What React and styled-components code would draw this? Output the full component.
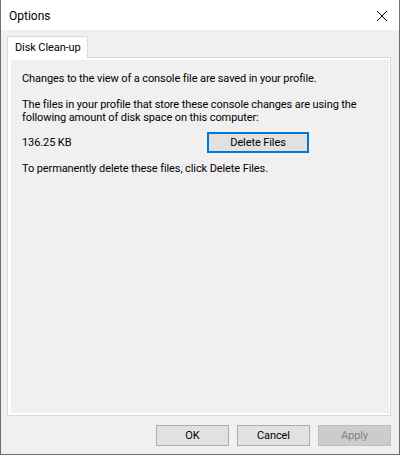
import styled, {createGlobalStyle} from "styled-components";

const GlobalStyle = createGlobalStyle`
    * { box-sizing: border-box; }
    html, body { margin: 0; padding: 0; background: #f0f0f0; }
    body {
        font-family: "Segoe UI", Roboto, "Liberation Sans", Arial, sans-serif;
        font-size: 11px;
        letter-spacing: -0.1px;
        color: #000;
    }
`;

const Window = styled.div`
    display: flex;
    flex-direction: column;
    width: 400px;
    height: 455px;
    background: #f0f0f0;
    border: 1px solid #6f6f6f;
    border-top: none;
`;
const TitleBar = styled.div`
    display: flex;
    align-items: center;
    justify-content: space-between;
    height: 31px;
    padding: 1px 10px 0 8px;
    background: #fff;
    font-size: 12px;
    letter-spacing: 0;
`;
const CloseBtn = styled.div`
    display: flex;
    width: 12px;
    height: 12px;
    margin-right: 1px;
`;
const Body = styled.div`
    flex: 1;
    display: flex;
    flex-direction: column;
    padding: 6px 8px 8px 6px;
`;
const TabStrip = styled.div`
    display: flex;
    height: 22px;
    margin-bottom: -1px;
    position: relative;
    z-index: 1;
`;
const Tab = styled.div`
    display: flex;
    align-items: center;
    height: 22px;
    padding: 0 6px 1px 7px;
    background: #fff;
    border: 1px solid #d9d9d9;
    border-bottom: none;
`;
const Panel = styled.div`
    display: flex;
    height: 359px;
    background: #fff;
    border: 1px solid #d9d9d9;
    padding: 2px 1px 2px 3px;
`;
const Page = styled.div`
    flex: 1;
    background: #f0f0f0;
    padding: 12px 11px;
    white-space: nowrap;
`;
const Para = styled.p`
    margin: 0 0 ${({$gap}) => $gap || 0}px;
    line-height: 13px;
`;
const SizeRow = styled.div`
    display: flex;
    align-items: center;
    height: 21px;
    margin-bottom: 9px;
`;
const SizeText = styled.span`
    width: 185px;
`;
const Button = styled.button`
    width: ${({$w}) => $w || 73}px;
    height: 21px;
    padding: 0 0 1px;
    font: inherit;
    letter-spacing: inherit;
    color: ${({disabled}) => (disabled ? "#838383" : "#000")};
    background: ${({disabled}) => (disabled ? "#cccccc" : "#e1e1e1")};
    border: ${({$focus, disabled}) =>
        $focus ? "2px solid #0078d7" : disabled ? "1px solid #bfbfbf" : "1px solid #adadad"};
`;
const Footer = styled.div`
    display: flex;
    justify-content: flex-end;
    gap: 8px;
    margin-top: 9px;
`;

function App() {
    return (
        <>
            <GlobalStyle/>
            <Window>
                <TitleBar>
                    <span>Options</span>
                    <CloseBtn>
                        <svg width="12" height="12" viewBox="0 0 12 12">
                            <path d="M1 1 L11 11 M11 1 L1 11" stroke="#000" strokeWidth="1" fill="none"/>
                        </svg>
                    </CloseBtn>
                </TitleBar>
                <Body>
                    <TabStrip>
                        <Tab>Disk Clean-up</Tab>
                    </TabStrip>
                    <Panel>
                        <Page>
                            <Para $gap={13}>Changes to the view of a console file are saved in your profile.</Para>
                            <Para $gap={8}>
                                The files in your profile that store these console changes are using the
                                <br/>following amount of disk space on this computer:
                            </Para>
                            <SizeRow>
                                <SizeText>136.25 KB</SizeText>
                                <Button $w={102} $focus>Delete Files</Button>
                            </SizeRow>
                            <Para>To permanently delete these files, click Delete Files.</Para>
                        </Page>
                    </Panel>
                    <Footer>
                        <Button>OK</Button>
                        <Button>Cancel</Button>
                        <Button disabled>Apply</Button>
                    </Footer>
                </Body>
            </Window>
        </>
    );
}

export default App;
